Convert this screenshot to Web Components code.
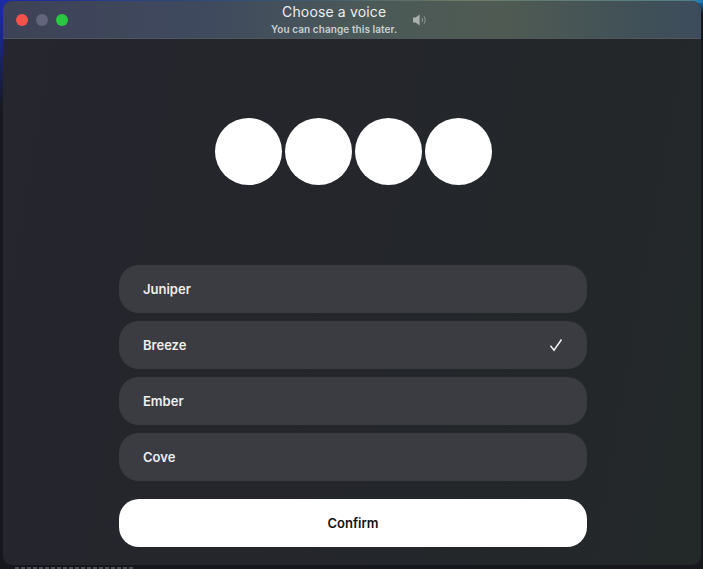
<!DOCTYPE html>
<html>
<head>
<meta charset="utf-8">
<style>
  html, body { margin: 0; height: 100%; }
  body {
    position: relative;
    width: 703px;
    height: 569px;
    overflow: hidden;
    background:
      radial-gradient(circle at 0 0, #1b2ba8 0, rgba(27,43,168,.75) 40px, rgba(27,43,168,0) 110px),
      radial-gradient(circle at 100% 0, #1479c4 0, rgba(20,121,196,0) 14px),
      linear-gradient(90deg, #25308a 0%, #2f4f78 35%, #6b7a62 65%, #4f8089 100%) top / 100% 3px no-repeat,
      #17181d;
    font-family: Inter, "Liberation Sans", sans-serif;
  }
  .desktop-label {
    position: absolute;
    left: 15px;
    top: 567px;
    width: 118px;
    height: 2px;
    background: repeating-linear-gradient(90deg, #7d7f86 0 4px, transparent 4px 6px);
    opacity: .55;
  }
</style>
</head>
<body>
<voice-window>
  <title-bar slot="bar" heading="Choose a voice" sub="You can change this later."></title-bar>
  <voice-orbs></voice-orbs>
  <voice-list>
    <voice-row>Juniper</voice-row>
    <voice-row selected>Breeze</voice-row>
    <voice-row>Ember</voice-row>
    <voice-row>Cove</voice-row>
  </voice-list>
  <confirm-button>Confirm</confirm-button>
</voice-window>
<div class="desktop-label"></div>

<script>
class VoiceWindow extends HTMLElement {
  constructor() {
    super();
    this.attachShadow({ mode: "open" });
    this.shadowRoot.innerHTML = `
      <style>
        :host {
          display: flex;
          flex-direction: column;
          box-sizing: border-box;
          width: 698px;
          height: 564px;
          margin: 1px 0 0 3px;
          border-radius: 9px;
          overflow: hidden;
          background: linear-gradient(100deg, #25262e 0%, #24262b 45%, #232829 100%);
        }
        .content {
          flex: 1;
          display: flex;
          flex-direction: column;
          align-items: center;
          padding: 79px 0 0 2px;
        }
      </style>
      <slot name="bar"></slot>
      <div class="content"><slot></slot></div>
    `;
  }
}

class TitleBar extends HTMLElement {
  constructor() {
    super();
    this.attachShadow({ mode: "open" });
    this.shadowRoot.innerHTML = `
      <style>
        :host {
          display: flex;
          align-items: center;
          height: 38px;
          box-sizing: border-box;
          background: linear-gradient(90deg, #3e4257 0%, #3f4a5e 30%, #4b5a58 52%, #4f5a52 72%, #3f5058 92%, #3d4c5c 100%);
          border-bottom: 1px solid #50565a;
          color: #eceef0;
        }
        .lights { display: flex; gap: 8px; box-sizing: border-box; width: 268px; padding-left: 13px; }
        .light { width: 12px; height: 12px; border-radius: 50%; }
        .red { background: #f5524c; }
        .grey { background: #62657c; }
        .green { background: #2ac840; }
        .titles { display: flex; flex-direction: column; align-items: center; }
        .heading { font-size: 14px; line-height: 18px; letter-spacing: 0.15px; }
        .sub { font-size: 10px; line-height: 14px; font-weight: 600; letter-spacing: 0.08px; color: #c8ced0; margin-top: 1px; }
        .sound { margin-left: 15px; display: flex; }
      </style>
      <div class="lights">
        <span class="light red"></span><span class="light grey"></span><span class="light green"></span>
      </div>
      <div class="titles">
        <span class="heading">${this.getAttribute("heading")}</span>
        <span class="sub">${this.getAttribute("sub")}</span>
      </div>
      <div class="sound">
        <svg width="17" height="14" viewBox="0 0 17 14" fill="none">
          <path d="M1 4.6h2.6L7.6 1.4v11.2L3.6 9.400H1z" fill="#a9b0ac"/>
          <path d="M10 5c.7 1.2.7 2.800 0 4M12.300 3.600c1.200 2.100 1.200 4.700 0 6.800" stroke="#8f9694" stroke-width="1" stroke-linecap="round"/>
        </svg>
      </div>
    `;
  }
}

class VoiceOrbs extends HTMLElement {
  constructor() {
    super();
    this.attachShadow({ mode: "open" });
    this.shadowRoot.innerHTML = `
      <style>
        :host { display: flex; gap: 3px; margin: 0 0 80px 1px; }
        span { width: 67px; height: 67px; border-radius: 50%; background: #fff; }
      </style>
      <span></span><span></span><span></span><span></span>
    `;
  }
}

class VoiceList extends HTMLElement {
  constructor() {
    super();
    this.attachShadow({ mode: "open" });
    this.shadowRoot.innerHTML = `
      <style>
        :host { display: flex; flex-direction: column; gap: 8px; width: 468px; margin-bottom: 18px; }
      </style>
      <slot></slot>
    `;
  }
}

class VoiceRow extends HTMLElement {
  constructor() {
    super();
    this.attachShadow({ mode: "open" });
    const check = this.hasAttribute("selected") ? `
      <svg width="14" height="14" viewBox="0 0 14 14" fill="none">
        <path d="M1.500 7.800 5 12.200 12.500 1.500" stroke="#f2f3f3" stroke-width="1.500"/>
      </svg>` : "";
    this.shadowRoot.innerHTML = `
      <style>
        :host {
          display: flex;
          align-items: center;
          justify-content: space-between;
          box-sizing: border-box;
          height: 48px;
          padding: 0 24px;
          border-radius: 20px;
          background: #3a3c41;
          color: #eeeeef;
          font-size: 13px;
          font-weight: 600;
        }
      </style>
      <slot></slot>${check}
    `;
  }
}

class ConfirmButton extends HTMLElement {
  constructor() {
    super();
    this.attachShadow({ mode: "open" });
    this.shadowRoot.innerHTML = `
      <style>
        :host {
          display: flex;
          align-items: center;
          justify-content: center;
          width: 468px;
          height: 48px;
          border-radius: 20px;
          background: #fff;
          color: #111;
          font-size: 13px;
          font-weight: 600;
        }
      </style>
      <slot></slot>
    `;
  }
}

customElements.define("voice-window", VoiceWindow);
customElements.define("title-bar", TitleBar);
customElements.define("voice-orbs", VoiceOrbs);
customElements.define("voice-list", VoiceList);
customElements.define("voice-row", VoiceRow);
customElements.define("confirm-button", ConfirmButton);
</script>
</body>
</html>
